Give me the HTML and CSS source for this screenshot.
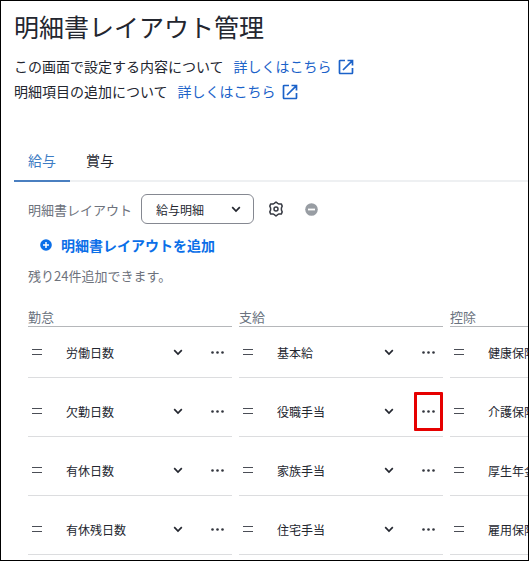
FILE: index.html
```html
<!DOCTYPE html>
<html lang="ja">

<head>
    <meta charset="UTF-8">
    <meta name="viewport" content="width=device-width, initial-scale=1.0">
    <title>明細書レイアウト管理</title>
    <link rel="stylesheet" href="styles.css">
</head>

<body>
    <!-- Shared icons -->
    <svg class="icon-defs" aria-hidden="true">
        <symbol id="icon-external" viewBox="0 0 16 16">
            <path d="M7 1.5H2.2a.7.7 0 0 0-.7.7v11.6a.7.7 0 0 0 .7.7h11.6a.7.7 0 0 0 .7-.7V9M9.5 1.5h5v5M14.2 1.8L5 11" fill="none" stroke="currentColor" stroke-width="1.7" />
        </symbol>
        <symbol id="icon-chevron" viewBox="0 0 10 10">
            <path d="M1.2 3.2L5 7l3.800-3.800" fill="none" stroke="currentColor" stroke-width="1.7" />
        </symbol>
        <symbol id="icon-handle" viewBox="0 0 10 6">
            <path d="M0 .5h10M0 5.500h10" stroke="currentColor" stroke-width="1" />
        </symbol>
        <symbol id="icon-dots" viewBox="0 0 13 3">
            <circle cx="1.500" cy="1.500" r="1.300" fill="currentColor" />
            <circle cx="6.500" cy="1.500" r="1.300" fill="currentColor" />
            <circle cx="11.500" cy="1.500" r="1.300" fill="currentColor" />
        </symbol>
    </svg>

    <main class="page">
        <h1 class="page-title">明細書レイアウト管理</h1>
        <p class="help-line">この画面で設定する内容について
            <a href="#" class="help-link">詳しくはこちら<svg class="icon-external"><use href="#icon-external" /></svg></a>
        </p>
        <p class="help-line">明細項目の追加について
            <a href="#" class="help-link">詳しくはこちら<svg class="icon-external"><use href="#icon-external" /></svg></a>
        </p>

        <nav class="tabs">
            <a href="#" class="tab active">給与</a>
            <a href="#" class="tab">賞与</a>
        </nav>

        <div class="content">
            <div class="toolbar">
                <label for="layoutSelect" class="toolbar-label">明細書レイアウト</label>
                <div class="select-wrap layout-select">
                    <select id="layoutSelect">
                        <option>給与明細</option>
                    </select>
                    <svg class="chevron"><use href="#icon-chevron" /></svg>
                </div>
                <button type="button" class="icon-button settings" aria-label="設定">
                    <svg width="16" height="16" viewBox="0 0 16 16" fill="none" stroke="currentColor" stroke-width="1.500" stroke-linejoin="round">
                        <path d="M6.300 2.400L8 1l1.700 1.400 1.300.7 2.300-.2.900 2.200-.800 1.900v2l.8 1.900-.9 2.200-2.300-.2-1.300.7L8 15l-1.700-1.400-1.300-.7-2.300.2-.9-2.200.8-1.900V7l-.8-1.900.9-2.200 2.300.2z" />
                        <circle cx="8" cy="8" r="2" />
                    </svg>
                </button>
                <button type="button" class="icon-button remove" aria-label="削除" disabled>
                    <svg width="13" height="13" viewBox="0 0 13 13">
                        <circle cx="6.500" cy="6.500" r="6.300" fill="currentColor" />
                        <path d="M3 6.500h7" stroke="#fff" stroke-width="1.800" />
                    </svg>
                </button>
            </div>

            <button type="button" class="add-button">
                <svg width="12" height="12" viewBox="0 0 12 12">
                    <circle cx="6" cy="6" r="5.800" fill="currentColor" />
                    <path d="M3 6h6M6 3v6" stroke="#fff" stroke-width="1.500" />
                </svg>
                明細書レイアウトを追加
            </button>
            <p class="remaining">残り24件追加できます。</p>

            <div class="board">
                <section class="column">
                    <h2 class="column-title">勤怠</h2>
                    <ul class="item-list">
                        <li class="item">
                            <svg class="handle"><use href="#icon-handle" /></svg>
                            <div class="select-wrap">
                                <select aria-label="勤怠 1"><option>労働日数</option></select>
                                <svg class="chevron"><use href="#icon-chevron" /></svg>
                            </div>
                            <button type="button" class="more" aria-label="メニュー"><svg class="dots"><use href="#icon-dots" /></svg></button>
                        </li>
                        <li class="item">
                            <svg class="handle"><use href="#icon-handle" /></svg>
                            <div class="select-wrap">
                                <select aria-label="勤怠 2"><option>欠勤日数</option></select>
                                <svg class="chevron"><use href="#icon-chevron" /></svg>
                            </div>
                            <button type="button" class="more" aria-label="メニュー"><svg class="dots"><use href="#icon-dots" /></svg></button>
                        </li>
                        <li class="item">
                            <svg class="handle"><use href="#icon-handle" /></svg>
                            <div class="select-wrap">
                                <select aria-label="勤怠 3"><option>有休日数</option></select>
                                <svg class="chevron"><use href="#icon-chevron" /></svg>
                            </div>
                            <button type="button" class="more" aria-label="メニュー"><svg class="dots"><use href="#icon-dots" /></svg></button>
                        </li>
                        <li class="item">
                            <svg class="handle"><use href="#icon-handle" /></svg>
                            <div class="select-wrap">
                                <select aria-label="勤怠 4"><option>有休残日数</option></select>
                                <svg class="chevron"><use href="#icon-chevron" /></svg>
                            </div>
                            <button type="button" class="more" aria-label="メニュー"><svg class="dots"><use href="#icon-dots" /></svg></button>
                        </li>
                    </ul>
                </section>

                <section class="column">
                    <h2 class="column-title">支給</h2>
                    <ul class="item-list">
                        <li class="item">
                            <svg class="handle"><use href="#icon-handle" /></svg>
                            <div class="select-wrap">
                                <select aria-label="支給 1"><option>基本給</option></select>
                                <svg class="chevron"><use href="#icon-chevron" /></svg>
                            </div>
                            <button type="button" class="more" aria-label="メニュー"><svg class="dots"><use href="#icon-dots" /></svg></button>
                        </li>
                        <li class="item">
                            <svg class="handle"><use href="#icon-handle" /></svg>
                            <div class="select-wrap">
                                <select aria-label="支給 2"><option>役職手当</option></select>
                                <svg class="chevron"><use href="#icon-chevron" /></svg>
                            </div>
                            <button type="button" class="more highlighted" aria-label="メニュー"><svg class="dots"><use href="#icon-dots" /></svg></button>
                        </li>
                        <li class="item">
                            <svg class="handle"><use href="#icon-handle" /></svg>
                            <div class="select-wrap">
                                <select aria-label="支給 3"><option>家族手当</option></select>
                                <svg class="chevron"><use href="#icon-chevron" /></svg>
                            </div>
                            <button type="button" class="more" aria-label="メニュー"><svg class="dots"><use href="#icon-dots" /></svg></button>
                        </li>
                        <li class="item">
                            <svg class="handle"><use href="#icon-handle" /></svg>
                            <div class="select-wrap">
                                <select aria-label="支給 4"><option>住宅手当</option></select>
                                <svg class="chevron"><use href="#icon-chevron" /></svg>
                            </div>
                            <button type="button" class="more" aria-label="メニュー"><svg class="dots"><use href="#icon-dots" /></svg></button>
                        </li>
                    </ul>
                </section>

                <section class="column">
                    <h2 class="column-title">控除</h2>
                    <ul class="item-list">
                        <li class="item">
                            <svg class="handle"><use href="#icon-handle" /></svg>
                            <div class="select-wrap">
                                <select aria-label="控除 1"><option>健康保険</option></select>
                                <svg class="chevron"><use href="#icon-chevron" /></svg>
                            </div>
                            <button type="button" class="more" aria-label="メニュー"><svg class="dots"><use href="#icon-dots" /></svg></button>
                        </li>
                        <li class="item">
                            <svg class="handle"><use href="#icon-handle" /></svg>
                            <div class="select-wrap">
                                <select aria-label="控除 2"><option>介護保険</option></select>
                                <svg class="chevron"><use href="#icon-chevron" /></svg>
                            </div>
                            <button type="button" class="more" aria-label="メニュー"><svg class="dots"><use href="#icon-dots" /></svg></button>
                        </li>
                        <li class="item">
                            <svg class="handle"><use href="#icon-handle" /></svg>
                            <div class="select-wrap">
                                <select aria-label="控除 3"><option>厚生年金</option></select>
                                <svg class="chevron"><use href="#icon-chevron" /></svg>
                            </div>
                            <button type="button" class="more" aria-label="メニュー"><svg class="dots"><use href="#icon-dots" /></svg></button>
                        </li>
                        <li class="item">
                            <svg class="handle"><use href="#icon-handle" /></svg>
                            <div class="select-wrap">
                                <select aria-label="控除 4"><option>雇用保険</option></select>
                                <svg class="chevron"><use href="#icon-chevron" /></svg>
                            </div>
                            <button type="button" class="more" aria-label="メニュー"><svg class="dots"><use href="#icon-dots" /></svg></button>
                        </li>
                    </ul>
                </section>
            </div>
        </div>
    </main>
</body>

</html>
```

FILE: styles.css
```css
* {
    box-sizing: border-box;
    margin: 0;
    padding: 0;
}

body {
    font-family: "Noto Sans CJK JP", sans-serif;
    font-size: 14px;
    color: #23262f;
    background-color: #fff;
}

.icon-defs {
    display: none;
}

.page {
    min-height: 100vh;
    padding: 7px 0 5px 13px;
    border: 1px solid #000;
    overflow: hidden;
}

.page-title {
    margin-bottom: 10px;
    font-size: 25px;
    font-weight: 400;
    line-height: 36px;
}

.help-line {
    display: flex;
    align-items: center;
    gap: 10px;
    line-height: 25px;
}

.help-link {
    display: flex;
    align-items: center;
    gap: 6px;
    color: #1b62c9;
    text-decoration: none;
}

.icon-external {
    width: 16px;
    height: 16px;
}

/* Tabs */
.tabs {
    display: flex;
    gap: 2px;
    margin-top: 37px;
    box-shadow: inset 0 -2px #eef0f2;
}

.tab {
    padding: 0 14px;
    border-bottom: 2px solid transparent;
    color: #23262f;
    line-height: 39px;
    text-decoration: none;
}

.tab.active {
    color: #3d7cc4;
    border-bottom-color: #4a7fc0;
}

.content {
    padding: 12px 0 0 14px;
}

/* Toolbar */
.toolbar {
    display: flex;
    align-items: center;
    height: 30px;
}

.toolbar-label {
    margin-right: 9px;
    color: #6d727c;
    font-size: 13px;
}

.select-wrap {
    display: flex;
    align-items: center;
    position: relative;
    flex: 1;
}

.select-wrap select {
    width: 100%;
    height: 28px;
    appearance: none;
    border: none;
    background: transparent;
    color: #23262f;
    font-family: inherit;
    font-size: 12px;
    cursor: pointer;
}

.chevron {
    position: absolute;
    right: 20px;
    width: 10px;
    height: 10px;
    pointer-events: none;
}

.layout-select {
    flex: 0 0 113px;
    border: 1px solid #858891;
    border-radius: 6px;
}

.layout-select select {
    padding-left: 14px;
}

.layout-select .chevron {
    right: 12px;
}

.icon-button {
    display: flex;
    border: none;
    background: none;
    color: #383b44;
}

.settings {
    margin-left: 14px;
}

.remove {
    margin-left: 21px;
    color: #989da3;
}

.add-button {
    display: flex;
    align-items: center;
    gap: 9px;
    margin: 10px 0 10px 12px;
    border: none;
    background: none;
    color: #0b6fe8;
    font-family: inherit;
    font-size: 14px;
    font-weight: 700;
    line-height: 22px;
    cursor: pointer;
}

.remaining {
    color: #6d727c;
    font-size: 13px;
    line-height: 20px;
}

/* Layout columns */
.board {
    display: flex;
    gap: 7px;
    margin-top: 22px;
}

.column {
    flex: 0 0 204px;
}

.column-title {
    border-bottom: 1px solid #b5b7ba;
    color: #6b7380;
    font-size: 13px;
    font-weight: 400;
    line-height: 18px;
}

.item-list {
    display: grid;
    gap: 8px;
    list-style: none;
}

.item {
    display: flex;
    align-items: center;
    height: 51px;
    padding-left: 4px;
    border-bottom: 1px solid #dcdddf;
}

.handle {
    width: 10px;
    height: 6px;
    margin-right: 24px;
    color: #4b4e56;
}

.more {
    display: flex;
    align-items: center;
    justify-content: center;
    width: 29px;
    height: 39px;
    border: none;
    background: none;
    color: #32353d;
    cursor: pointer;
}

.more.highlighted {
    border: 3px solid #e60000;
    border-radius: 1px;
}

.dots {
    width: 13px;
    height: 3px;
}
```
